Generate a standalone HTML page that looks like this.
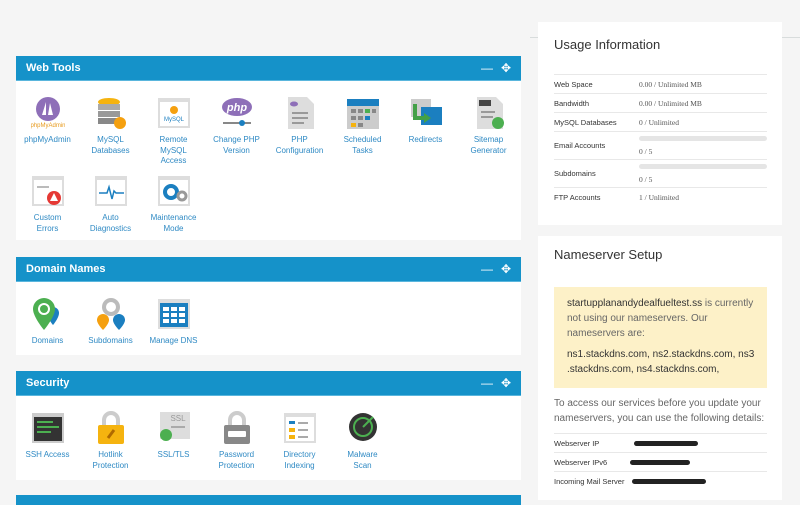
<!DOCTYPE html>
<html><head><meta charset="utf-8"><style>
*{box-sizing:border-box;margin:0;padding:0}
body{width:800px;height:500px;overflow:hidden;background:#f5f5f5;font-family:"Liberation Sans",sans-serif;position:relative}
.topline{position:absolute;left:530px;top:37px;width:270px;height:1px;background:#d8dcdc}
.panel{position:absolute;left:16px;width:505px;background:#fff}
.hd{height:25px;background:#1592c9;color:#fff;font-weight:bold;font-size:11px;line-height:24px;padding-left:10px;position:relative;border-bottom:1px solid #5ab6dd}
.hd .c{position:absolute;right:2px;top:0;font-weight:normal;font-size:12px;letter-spacing:8px}
.it{position:absolute;width:63px;text-align:center;font-size:8px;line-height:10.5px;color:#2f8ac4}
.ic{width:34px;height:34px;margin:0 auto 5px;position:relative}
.rp{position:absolute;left:538px;width:244px;background:#fff}
h2{font-weight:normal;font-size:13px;color:#333;position:absolute;left:16px}
table{border-collapse:collapse;position:absolute;left:16px;width:213px}
td{font-size:7.5px;color:#333;border-top:1px solid #e8e8e8;height:19px;vertical-align:middle}
td.v{font-family:"Liberation Serif",serif;color:#555}
.bar{height:5px;background:#e5e5e5;border-radius:3px;margin:0 0 6px}
.warn{position:absolute;left:16px;top:51px;width:213px;height:101px;background:#fdf1c8;padding:9px 13px;font-size:10px;line-height:15px;color:#666}
.blk{display:inline-block;height:5px;background:#222;border-radius:3px;vertical-align:middle}
</style></head><body>
<div class="topline"></div>

<div class="panel" style="top:56px;height:184px">
<div class="hd">Web Tools<span class="c">—✥</span></div>
<div class="it" style="left:0;top:40px"><div class="ic"><svg width="34" height="34"><circle cx="17" cy="13" r="12" fill="#8e6fb8"/><path d="M11 19 L15 6 L15 19Z M17 19 L19 7 L22 19Z" fill="#fff"/><text x="17" y="31" font-size="6" fill="#e79a1c" text-anchor="middle" font-family="Liberation Sans">phpMyAdmin</text></svg></div>phpMyAdmin</div>
<div class="it" style="left:63px;top:40px"><div class="ic"><svg width="34" height="34"><ellipse cx="15" cy="6" rx="11" ry="4" fill="#f5b30f"/><rect x="4" y="8" width="22" height="6" fill="#aaa"/><rect x="4" y="15" width="22" height="6" fill="#999"/><rect x="4" y="22" width="22" height="6" fill="#888"/><circle cx="26" cy="27" r="6" fill="#f5a00f"/></svg></div>MySQL<br>Databases</div>
<div class="it" style="left:126px;top:40px"><div class="ic"><svg width="34" height="34"><rect x="1" y="2" width="32" height="30" fill="#ddd"/><rect x="3" y="6" width="28" height="24" fill="#fff"/><circle cx="17" cy="14" r="4" fill="#f5a00f"/><text x="17" y="25" font-size="6" fill="#1b7fc0" text-anchor="middle">MySQL</text></svg></div>Remote<br>MySQL<br>Access</div>
<div class="it" style="left:189px;top:40px"><div class="ic"><svg width="34" height="34"><ellipse cx="17" cy="11" rx="15" ry="9" fill="#8e6fb8"/><text x="17" y="15" font-size="11" fill="#fff" text-anchor="middle" font-style="italic" font-weight="bold">php</text><rect x="3" y="26" width="28" height="2" fill="#888"/><circle cx="22" cy="27" r="3" fill="#1b7fc0"/></svg></div>Change PHP<br>Version</div>
<div class="it" style="left:252px;top:40px"><div class="ic"><svg width="34" height="34"><path d="M5 1H24L31 8V33H5Z" fill="#ddd"/><ellipse cx="11" cy="8" rx="4" ry="2.5" fill="#8e6fb8"/><rect x="9" y="16" width="16" height="2" fill="#999"/><rect x="9" y="21" width="16" height="2" fill="#999"/><rect x="9" y="26" width="12" height="2" fill="#999"/></svg></div>PHP<br>Configuration</div>
<div class="it" style="left:315px;top:40px"><div class="ic"><svg width="34" height="34"><rect x="1" y="3" width="32" height="30" fill="#ccc"/><rect x="1" y="3" width="32" height="7" fill="#1b7fc0"/><g fill="#888"><rect x="5" y="13" width="5" height="4"/><rect x="12" y="13" width="5" height="4"/><rect x="19" y="13" width="5" height="4" fill="#4caf50"/><rect x="26" y="13" width="4" height="4"/><rect x="5" y="20" width="5" height="4"/><rect x="12" y="20" width="5" height="4"/><rect x="19" y="20" width="5" height="4" fill="#1b7fc0"/><rect x="5" y="27" width="5" height="4" fill="#f5b30f"/><rect x="12" y="27" width="5" height="4"/></g></svg></div>Scheduled<br>Tasks</div>
<div class="it" style="left:378px;top:40px"><div class="ic"><svg width="34" height="34"><rect x="2" y="3" width="20" height="18" fill="#ccc"/><rect x="12" y="11" width="21" height="18" fill="#1b7fc0"/><path d="M6 8V22H16" stroke="#43a047" stroke-width="4" fill="none"/><path d="M15 17L22 22L15 27Z" fill="#43a047"/></svg></div>Redirects</div>
<div class="it" style="left:441px;top:40px"><div class="ic"><svg width="34" height="34"><path d="M5 1H24L31 8V33H5Z" fill="#ddd"/><rect x="7" y="4" width="12" height="6" fill="#444"/><rect x="9" y="15" width="14" height="2" fill="#999"/><rect x="9" y="20" width="12" height="2" fill="#999"/><circle cx="26" cy="27" r="6" fill="#4caf50"/></svg></div>Sitemap<br>Generator</div>
<div class="it" style="left:0;top:118px"><div class="ic"><svg width="34" height="34"><rect x="1" y="2" width="32" height="30" fill="#ddd"/><rect x="3" y="6" width="28" height="24" fill="#fff"/><rect x="6" y="12" width="12" height="2" fill="#bbb"/><circle cx="23" cy="24" r="7" fill="#e53935"/><path d="M23 19L27 27H19Z" fill="#fff"/></svg></div>Custom<br>Errors</div>
<div class="it" style="left:63px;top:118px"><div class="ic"><svg width="34" height="34"><rect x="1" y="2" width="32" height="30" fill="#ddd"/><rect x="3" y="6" width="28" height="24" fill="#fff"/><path d="M5 19H13L15 13L18 25L20 17L22 19H30" stroke="#1b7fc0" stroke-width="1.5" fill="none"/></svg></div>Auto<br>Diagnostics</div>
<div class="it" style="left:126px;top:118px"><div class="ic"><svg width="34" height="34"><rect x="1" y="2" width="32" height="30" fill="#ddd"/><rect x="3" y="6" width="28" height="24" fill="#fff"/><circle cx="14" cy="18" r="6" fill="none" stroke="#1b7fc0" stroke-width="4"/><circle cx="25" cy="22" r="4" fill="none" stroke="#999" stroke-width="3"/></svg></div>Maintenance<br>Mode</div>
</div>

<div class="panel" style="top:257px;height:98px">
<div class="hd">Domain Names<span class="c">—✥</span></div>
<div class="it" style="left:0;top:40px"><div class="ic"><svg width="34" height="34"><path d="M22 10a6 6 0 0 1 6 6c0 5-6 12-6 12s-6-7-6-12a6 6 0 0 1 6-6z" fill="#1b7fc0"/><path d="M13 1a11 11 0 0 1 11 11c0 8-11 21-11 21S2 20 2 12A11 11 0 0 1 13 1z" fill="#4caf50"/><circle cx="13" cy="12" r="6" fill="#fff"/><circle cx="13" cy="12" r="4" fill="#4caf50"/></svg></div>Domains</div>
<div class="it" style="left:63px;top:40px"><div class="ic"><svg width="34" height="34"><circle cx="17" cy="10" r="9" fill="#bbb"/><circle cx="17" cy="10" r="5" fill="#fff"/><path d="M9 17a6 6 0 0 1 6 6c0 4-6 10-6 10s-6-6-6-10a6 6 0 0 1 6-6z" fill="#f5a00f"/><path d="M25 17a6 6 0 0 1 6 6c0 4-6 10-6 10s-6-6-6-10a6 6 0 0 1 6-6z" fill="#1b7fc0"/></svg></div>Subdomains</div>
<div class="it" style="left:126px;top:40px"><div class="ic"><svg width="34" height="34"><rect x="1" y="2" width="32" height="30" fill="#ddd"/><rect x="3" y="6" width="28" height="24" fill="#1b7fc0"/><g fill="#fff"><rect x="6" y="10" width="6" height="4"/><rect x="14" y="10" width="6" height="4"/><rect x="22" y="10" width="6" height="4"/><rect x="6" y="16" width="6" height="4"/><rect x="14" y="16" width="6" height="4"/><rect x="22" y="16" width="6" height="4"/><rect x="6" y="22" width="6" height="4"/><rect x="14" y="22" width="6" height="4"/><rect x="22" y="22" width="6" height="4"/></g></svg></div>Manage DNS</div>
</div>

<div class="panel" style="top:371px;height:109px">
<div class="hd">Security<span class="c">—✥</span></div>
<div class="it" style="left:0;top:40px"><div class="ic"><svg width="34" height="34"><rect x="1" y="2" width="32" height="30" fill="#ccc"/><rect x="3" y="6" width="28" height="24" fill="#333"/><rect x="6" y="10" width="16" height="2" fill="#4caf50"/><rect x="6" y="15" width="22" height="2" fill="#4caf50"/><rect x="6" y="20" width="14" height="2" fill="#4caf50"/></svg></div>SSH Access</div>
<div class="it" style="left:63px;top:40px"><div class="ic"><svg width="34" height="34"><path d="M10 15V9a7 7 0 0 1 14 0v6" stroke="#ccc" stroke-width="4" fill="none"/><rect x="4" y="14" width="26" height="19" rx="2" fill="#f5b30f"/><path d="M14 27L20 19" stroke="#b06a00" stroke-width="3"/></svg></div>Hotlink<br>Protection</div>
<div class="it" style="left:126px;top:40px"><div class="ic"><svg width="34" height="34"><rect x="3" y="1" width="30" height="27" fill="#ddd"/><text x="21" y="10" font-size="8" fill="#999" text-anchor="middle">SSL</text><rect x="14" y="15" width="14" height="2" fill="#aaa"/><circle cx="9" cy="24" r="6" fill="#4caf50"/></svg></div>SSL/TLS</div>
<div class="it" style="left:189px;top:40px"><div class="ic"><svg width="34" height="34"><path d="M10 15V9a7 7 0 0 1 14 0v6" stroke="#ccc" stroke-width="4" fill="none"/><rect x="4" y="14" width="26" height="19" rx="2" fill="#888"/><rect x="8" y="20" width="18" height="6" rx="1" fill="#fff"/></svg></div>Password<br>Protection</div>
<div class="it" style="left:252px;top:40px"><div class="ic"><svg width="34" height="34"><rect x="1" y="2" width="32" height="30" fill="#ddd"/><rect x="3" y="6" width="28" height="24" fill="#fff"/><rect x="6" y="10" width="6" height="3" fill="#1b7fc0"/><rect x="6" y="17" width="6" height="4" fill="#f5b30f"/><rect x="6" y="24" width="6" height="4" fill="#f5b30f"/><rect x="15" y="11" width="10" height="2" fill="#aaa"/><rect x="15" y="18" width="10" height="2" fill="#aaa"/><rect x="15" y="25" width="10" height="2" fill="#aaa"/></svg></div>Directory<br>Indexing</div>
<div class="it" style="left:315px;top:40px"><div class="ic"><svg width="34" height="34"><circle cx="17" cy="16" r="14" fill="#333"/><circle cx="17" cy="16" r="9" fill="none" stroke="#4caf50" stroke-width="2"/><path d="M17 16L27 6" stroke="#4caf50" stroke-width="2"/></svg></div>Malware<br>Scan</div>
</div>
<div class="panel" style="top:495px;height:10px;background:#1592c9"></div>

<div class="rp" style="top:22px;height:203px">
<h2 style="top:15px">Usage Information</h2>
<table style="top:52px">
<tr><td style="width:85px">Web Space</td><td class="v">0.00 / Unlimited MB</td></tr>
<tr><td>Bandwidth</td><td class="v">0.00 / Unlimited MB</td></tr>
<tr><td style="height:18px">MySQL Databases</td><td class="v">0 / Unlimited</td></tr>
<tr><td style="height:28px">Email Accounts</td><td class="v"><div class="bar"></div>0 / 5</td></tr>
<tr><td style="height:28px">Subdomains</td><td class="v"><div class="bar"></div>0 / 5</td></tr>
<tr><td>FTP Accounts</td><td class="v">1 / Unlimited</td></tr>
</table>
</div>

<div class="rp" style="top:236px;height:264px">
<h2 style="top:11px">Nameserver Setup</h2>
<div class="warn"><b style="font-weight:normal;color:#333">startupplanandydealfueltest.ss</b> is currently not using our nameservers. Our nameservers are:<div style="margin-top:6px;color:#333;white-space:nowrap">ns1.stackdns.com, ns2.stackdns.com, ns3<br>.stackdns.com, ns4.stackdns.com,</div></div>
<div style="position:absolute;left:16px;top:160px;width:220px;font-size:10px;line-height:15px;color:#666">To access our services before you update your nameservers, you can use the following details:</div>
<table style="top:197px">
<tr><td style="width:80px;height:19px">Webserver IP</td><td><span class="blk" style="width:64px"></span></td></tr>
<tr><td style="height:19px">Webserver IPv6</td><td><span class="blk" style="width:60px;margin-left:-4px"></span></td></tr>
<tr><td style="height:19px">Incoming Mail Server</td><td><span class="blk" style="width:74px;margin-left:-2px"></span></td></tr>
</table>
</div>
</body></html>
